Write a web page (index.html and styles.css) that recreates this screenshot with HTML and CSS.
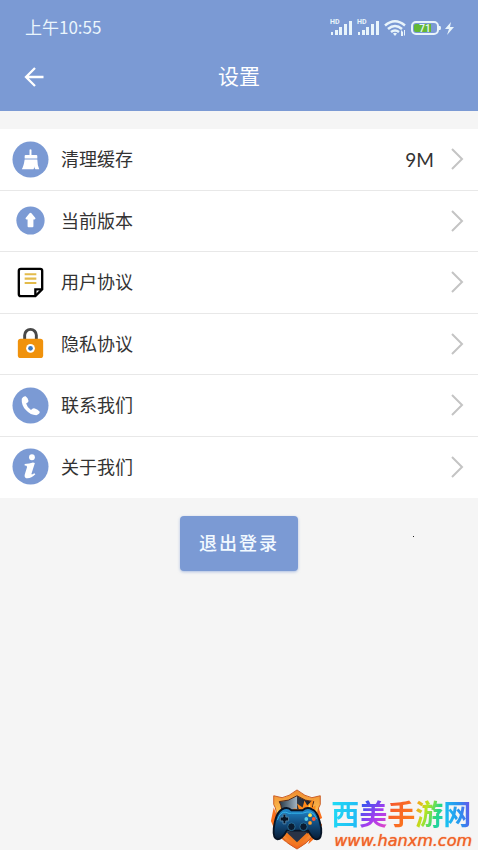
FILE: index.html
```html
<!DOCTYPE html>
<html lang="zh-CN">
<head>
<meta charset="utf-8">
<meta name="viewport" content="width=device-width, initial-scale=1">
<title>设置</title>
<link rel="stylesheet" href="styles.css">
</head>
<body>
<header class="header">
  <div class="status">
    <span>上午10:55</span>
    <svg class="status-icons" width="128" height="20" viewBox="0 0 128 20" fill="#e8f4fb">
      <g id="signal">
        <text x="2" y="7" class="hd">HD</text>
        <path d="M3 15h2v3H3zM7 13h3v5H7zM11 10h3v8h-3zM16 7h3v11h-3zM21 4h3v14h-3z"/>
      </g>
      <use href="#signal" x="27"/>
      <g fill="none" stroke="#e8f4fb" stroke-width="2.500">
        <path d="M57 8.500Q67 0 77 8.500M60 12Q67 6 74 12M63 15Q67 12 71 15"/>
      </g>
      <path d="M65 16.500Q67 15 69 16.500L67 19zM73 13l2 2v4h-2zM76 13h1v5l-1 1z"/>
      <rect x="84" y="5" width="26" height="12" rx="4" fill="none" stroke="#e8f4fb" stroke-width="2"/>
      <path fill="#63b936" d="M88 7h15v8H88q-2 0-2-2V9q0-2 2-2z"/>
      <path d="M111 9h1q1 0 1 2t-1 2h-1zM123 5l-6 7h4l-2 6 7-8h-4z"/>
      <text x="97" y="15" class="charge">71</text>
    </svg>
  </div>
  <nav class="navbar">
    <button class="back" aria-label="返回">
      <svg width="20" height="20" viewBox="0 0 20 20" fill="none" stroke="#fff" stroke-width="2.300"><path d="M19.500 10H2M11 1L2 10l9 9"/></svg>
    </button>
    <h1>设置</h1>
  </nav>
</header>
<main>
  <ul class="list">
    <li><a class="row" href="#">
      <svg class="icon" viewBox="0 0 38 38"><circle cx="19" cy="19" r="18.500" fill="#7b9ad4"/><path fill="#fff" d="M18 9q1-1 2 0v5.500h5q1 0 1 1V18H13v-2.500q0-1 1-1h4zM13 19h13q0 6 2 10h-4q-1-1-1-3 0 2-1 3H10q2-3 3-10z"/></svg>
      <span class="label">清理缓存</span><span class="value">9M</span>
      <svg class="chevron" viewBox="0 0 14 24"><path d="M2 2l10 10L2 22"/></svg>
    </a></li>
    <li><a class="row" href="#">
      <svg class="icon" viewBox="0 0 38 38"><circle cx="19" cy="19" r="14.500" fill="#7b9ad4"/><path fill="#fff" d="M18 11.500q1-1 2 0l4 5q.5 1.500-1 1.500h-1v7q0 1-1 1h-4q-1 0-1-1v-7h-1q-1.500 0-1-1.500z"/></svg>
      <span class="label">当前版本</span>
      <svg class="chevron" viewBox="0 0 14 24"><path d="M2 2l10 10L2 22"/></svg>
    </a></li>
    <li><a class="row" href="#">
      <svg class="icon" viewBox="0 0 38 38"><path d="M9 5h20q2 0 2 2v19l-7 7H9q-2 0-2-2V7q0-2 2-2z" fill="#fff" stroke="#000" stroke-width="2.400"/><path d="M30 26h-6v6" fill="none" stroke="#000" stroke-width="2.400"/><path d="M13 10.500h12M13 15h12M13 19.500h12" stroke="#e3bb4b" stroke-width="2.200"/></svg>
      <span class="label">用户协议</span>
      <svg class="chevron" viewBox="0 0 14 24"><path d="M2 2l10 10L2 22"/></svg>
    </a></li>
    <li><a class="row" href="#">
      <svg class="icon" viewBox="0 0 38 38"><path d="M13 15v-4.500a6 6 0 0 1 12 0V15" fill="none" stroke="#484848" stroke-width="3"/><rect x="6" y="14" width="26" height="20" rx="3" fill="#f0920c"/><circle cx="19" cy="24" r="4.500" fill="#fff"/><circle cx="19" cy="24" r="2.400" fill="#3d79bd"/></svg>
      <span class="label">隐私协议</span>
      <svg class="chevron" viewBox="0 0 14 24"><path d="M2 2l10 10L2 22"/></svg>
    </a></li>
    <li><a class="row" href="#">
      <svg class="icon" viewBox="0 0 38 38"><circle cx="19" cy="19" r="18.500" fill="#7b9ad4"/><path fill="#fff" d="M10 12q1.500-3 4-2.500 2.500 1.500 3 5 0 1.500-2.500 2.500 1 4 5 6.500 2-2.500 4-1.500 3 1 5 3.500 0 2.500-3.500 3.500-6 0-10.500-5-5-5-4.500-12z"/></svg>
      <span class="label">联系我们</span>
      <svg class="chevron" viewBox="0 0 14 24"><path d="M2 2l10 10L2 22"/></svg>
    </a></li>
    <li><a class="row" href="#">
      <svg class="icon" viewBox="0 0 38 38"><circle cx="19" cy="19" r="18.500" fill="#7b9ad4"/><circle cx="20.500" cy="9.500" r="3" fill="#fff"/><path fill="#fff" d="M13 16.500q5 0 8.500-1.500l2 .5-3.500 11q0 1.500 3-.5l1 1q-5 5-9.500 4-2.500-1-1-5l2-6.500q0-1.500-2.500-1.500z"/></svg>
      <span class="label">关于我们</span>
      <svg class="chevron" viewBox="0 0 14 24"><path d="M2 2l10 10L2 22"/></svg>
    </a></li>
  </ul>
  <div class="actions">
    <button class="logout">退出登录</button>
    <i class="speck"></i>
  </div>
</main>
<aside class="brand">
  <svg width="54" height="62" viewBox="0 0 58 64" preserveAspectRatio="none">
    <defs>
      <linearGradient id="fire" x1="0" y1="0" x2="0" y2="1"><stop offset="0" stop-color="#ef8a2c"/><stop offset=".45" stop-color="#ffcb5b"/><stop offset="1" stop-color="#f0601a"/></linearGradient>
      <linearGradient id="steel"><stop offset="0" stop-color="#263847"/><stop offset=".5" stop-color="#9db0bf"/><stop offset=".51" stop-color="#303a48"/><stop offset="1" stop-color="#101925"/></linearGradient>
      <linearGradient id="pad" x1="0" y1="0" x2="0" y2="1"><stop offset="0" stop-color="#218bd0"/><stop offset=".5" stop-color="#124c7e"/><stop offset="1" stop-color="#071c36"/></linearGradient>
    </defs>
    <path fill="#f9701c" d="M4 20L1 34l6 14 10 8-5-15zM51 17l5 14-4 2 4 5-6 12-9 8 6-20z"/>
    <path fill="url(#fire)" stroke="#c95a22" d="M29 2q9 7 16 8l9-2v9q-4 6-2 15 0 19-23 31Q5 51 6 32q2-9-2-15V8l9 2q7-1 16-8z"/>
    <path fill="url(#steel)" stroke="#512619" d="M29 8q9 6 18 6-3 7-1 18 0 15-17 25Q11 47 12 32q2-11-2-18 10 0 19-6z"/>
    <path fill="#ff8919" d="M28 26l-3-5 6 1-2-6 6 4 2-7 3 5 7-7-2 9 4-2-1 12z"/>
    <path fill="#ffdc59" d="M34 26l2-4 3 2 4-8 1 10z"/>
    <path fill="#f17920" d="M14 48l15-6 14 6-14 12z"/>
    <path fill="#293346" d="M18 46l11-4 11 4-11 10z"/>
    <path fill="url(#pad)" stroke="#071425" stroke-width="2" d="M13 22q6-3 10 1h12q5-4 10-1 7 2 10 20 1 11-5 11-4 0-9-9H18q-5 9-10 9-5-1-4-11 2-17 9-20z"/>
    <path d="M8 33q3-9 9-8 4 2 6 1h12q5-2 9-1 4 1 6 7" fill="none" stroke="#34b6eb"/>
    <path d="M14 27h3v3h3v4h-3v3h-3v-3h-3v-4h3z" fill="#071527" stroke="#5283a5"/>
    <circle cx="23" cy="40" r="4" fill="#0a1c31" stroke="#276d95"/><circle cx="36" cy="40" r="4" fill="#0a1c31" stroke="#276d95"/>
    <circle cx="43" cy="28" r="2" fill="#ffe24a"/><circle cx="39" cy="32" r="2" fill="#55cde9"/><circle cx="47" cy="32" r="2" fill="#ff552c"/><circle cx="43" cy="36" r="2" fill="#ffa12c"/>
  </svg>
  <div class="brand-text">
    <strong><span class="c1">西</span><span class="c2">美</span><span class="c3">手</span><span class="c4">游</span><span class="c5">网</span></strong>
    <em>www.hanxm.com</em>
  </div>
</aside>
</body>
</html>
```
FILE: styles.css
```css
* { box-sizing: border-box; }
body {
  margin: 0;
  min-height: 100vh;
  position: relative;
  background: #f5f5f5;
  color: #333;
  font-family: "Noto Sans CJK SC", sans-serif;
}
button { border: 0; padding: 0; font: inherit; color: inherit; }
.header {
  background: #7b9ad4;
  color: #fff;
  padding-top: 16px;
}
.status {
  display: flex;
  justify-content: space-between;
  align-items: center;
  height: 22px;
  padding: 0 22px 0 25px;
  font-size: 17px;
  line-height: 22px;
  color: #eaf5fc;
}
.hd { font: bold 7px Roboto, sans-serif; }
.charge { font: 500 10px Roboto, sans-serif; text-anchor: middle; }
.navbar {
  display: grid;
  grid-template-columns: 68px 1fr 68px;
  align-items: center;
  height: 73px;
}
.back { background: none; height: 44px; padding-top: 4px; display: grid; place-items: center; }
h1 { margin: 0; text-align: center; font-size: 21px; font-weight: 400; }
.list {
  display: grid;
  grid-auto-rows: 1fr;
  min-height: 369px;
  margin: 18px 0 0;
  padding: 0;
  list-style: none;
  background: #fff;
}
.list li { border-bottom: 1px solid #e8e8e8; }
.list li:last-child { border-color: transparent; }
.row {
  display: flex;
  align-items: center;
  height: 100%;
  padding: 0 14px 0 12px;
  color: inherit;
  font-size: 18px;
  text-decoration: none;
}
.icon { width: 37px; height: 37px; margin-right: 12px; }
.label { flex: 1; padding-bottom: 2px; }
.value { margin-right: 16px; font-family: Lato, sans-serif; font-size: 19px; }
.chevron { width: 14px; height: 24px; fill: none; stroke: #c4c4c4; stroke-width: 2; }
.actions { position: relative; padding: 18px 0; text-align: center; }
.logout {
  width: 118px;
  height: 55px;
  padding-bottom: 4px;
  border-radius: 4px;
  background: #7b9ad4;
  box-shadow: 0 1px 3px #7b9ad499;
  color: #f2f9ff;
  font-size: 18px;
  font-weight: 500;
  letter-spacing: 2px;
}
.speck { position: absolute; top: 38px; right: 64px; width: 1px; height: 1px; background: #222; }
.brand {
  position: absolute;
  right: 6px;
  bottom: 0;
  display: flex;
  align-items: flex-end;
  gap: 7px;
}
.brand-text { display: flex; flex-direction: column; gap: 4px; }
.brand strong { font-size: 28px; font-weight: 700; line-height: 30px; }
.brand strong span { -webkit-background-clip: text; background-clip: text; color: transparent; }
.c1 { background-image: linear-gradient(100deg, #20dff4, #21b6f5); }
.c2 { background-image: linear-gradient(135deg, #3155ef 20%, #a93cee 60%, #f34bb8); }
.c3 { background-image: linear-gradient(120deg, #f34e32, #ff8617); }
.c4 { background-image: linear-gradient(110deg, #ff9c18 10%, #b9e51e 40%, #26d786 70%, #18c9dc); }
.c5 { background-image: linear-gradient(80deg, #16cff2, #2795ef 55%, #7545e9); }
.brand em {
  padding-left: 3px;
  font: italic 400 16px/18px "DejaVu Sans", sans-serif;
  color: #f16329;
  text-shadow: 0 0 1px #f16329;
}
```
